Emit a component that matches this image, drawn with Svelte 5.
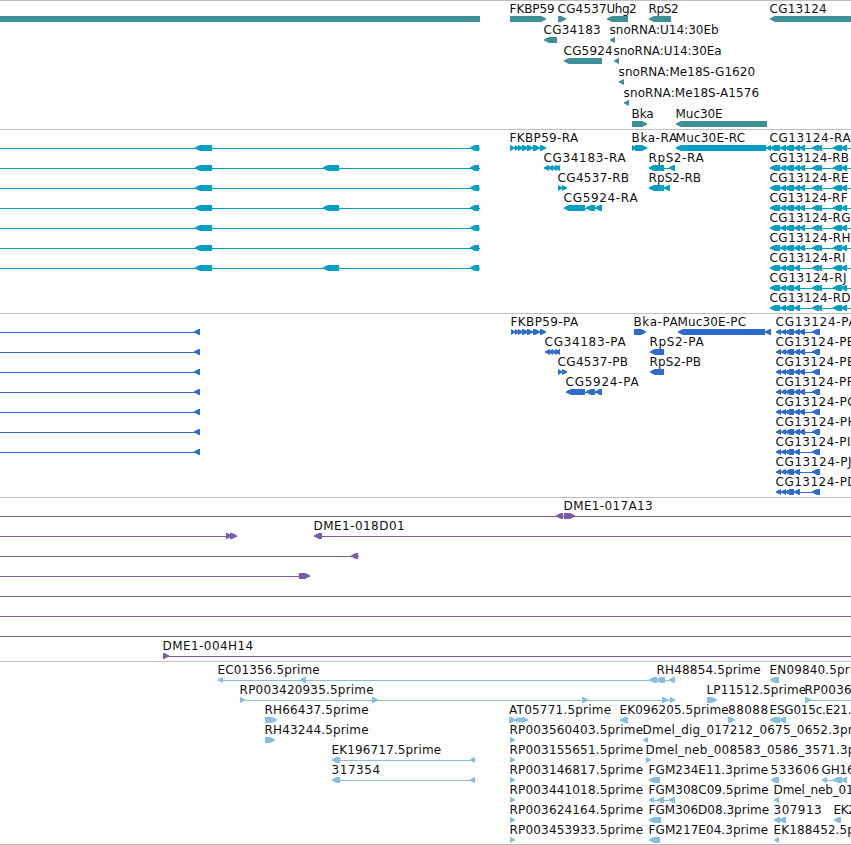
<script>
    const WIDTH = 851;

    // strand: 1 forward, -1 reverse; the line joins the first and last part
    // unless a span is given
    function feature(label, x, end, strand, parts = [], span = null) {
        return { label, x: x + 0.6, width: end - x - 1, strand, parts, span };
    }

    // feature without a visible label
    function bare(strand, parts, span = null) {
        return feature("", 0, 0, strand, parts, span);
    }

    function arrow([start, end], strand) {
        const tip = Math.min(5, end - start);
        const head = strand < 0 ? start : end;
        const tail = strand < 0 ? end : start;
        const dir = -strand;
        return [
            [head, 18.4],
            [head + dir * tip * 0.5, 17],
            [head + dir * tip, 16],
            [tail, 16],
            [tail, 22],
            [head + dir * tip, 22],
            [head + dir * tip * 0.5, 20.8],
            [head, 19.4]
        ].map((p) => p.join(",")).join(" ");
    }

    function spanOf(f) {
        if (f.span) return f.span;
        if (f.parts.length < 2) return null;
        return [f.parts[0][0], f.parts[f.parts.length - 1][1]];
    }

    const genes = [
        [
            bare(-1, [[-20, 480]]),
            feature("FKBP59", 509, 555, 1, [[510, 546]]),
            feature("CG4537", 557, 607, 1, [[558, 566]]),
            feature("Uhg2", 606, 637, -1, [[607, 628]]),
            feature("RpS2", 648, 679, -1, [[649, 671]]),
            feature("CG13124", 769, 827, -1, [[770, 900]])
        ],
        [
            feature("CG34183", 543, 601, -1, [[544, 557]]),
            feature("snoRNA:U14:30Eb", 609, 719, -1, [[610, 615]])
        ],
        [
            feature("CG5924", 563, 613, -1, [[564, 602]]),
            feature("snoRNA:U14:30Ea", 613, 722, -1, [[614, 619]])
        ],
        [feature("snoRNA:Me18S-G1620", 618, 755.5, -1, [[619, 624]])],
        [feature("snoRNA:Me18S-A1576", 623, 759.5, -1, [[624, 629]])],
        [
            feature("Bka", 631, 654, 1, [[632, 647]]),
            feature("Muc30E", 675, 723, -1, [[676, 767]])
        ]
    ];

    const fkbpExons = [[510, 515], [515, 519], [518, 523], [522, 528], [527, 533], [533, 540], [540, 546]];
    const transcriptEnds = [
        ["RA", 851], ["RB", 849.5], ["RE", 849], ["RF", 848], ["RG", 851],
        ["RH", 851], ["RI", 846], ["RJ", 847], ["RD", 851]
    ];
    const transcriptExtras = [
        [
            feature("FKBP59-RA", 509, 578.5, 1, fkbpExons),
            feature("Bka-RA", 631, 677.5, 1, [[632, 636], [635, 647]]),
            feature("Muc30E-RC", 675, 745.5, -1, [[676, 766], [766, 771]])
        ],
        [
            feature("CG34183-RA", 543, 626, -1, [[544, 549], [548, 553], [552, 557], [555, 560]]),
            feature("RpS2-RA", 648, 704, -1, [[649, 664], [669, 675]])
        ],
        [
            feature("CG4537-RB", 557, 629.5, 1, [[558, 562], [562, 567]]),
            feature("RpS2-RB", 648, 701.5, -1, [[649, 664], [664, 670]])
        ],
        [feature("CG5924-RA", 563, 638, -1, [[564, 585], [586, 595], [595, 602]])]
    ];
    const transcripts = transcriptEnds.map(([name, end], i) => {
        const row = [...(transcriptExtras[i] ?? [])];
        if (i < 7) {
            const middle = [1, 3, 6].includes(i) ? [[323, 339]] : [];
            row.push(bare(-1, [[195, 212], ...middle, [470, 479]], [-10, 480]));
        }
        const tail = i < 6 ? [[794, 800], [799, 805]] : [[794, 800]];
        row.push(feature("CG13124-" + name, 769, end, -1,
            [[770, 780], [780, 786], [785, 794], ...tail, [812, 819], [816, 822], [833, 842], [841, 847]],
            [770, 860]));
        return row;
    });

    const proteinEnds = [
        ["PA", 857], ["PB", 855.5], ["PE", 855], ["PF", 854], ["PG", 857],
        ["PH", 857], ["PI", 851], ["PJ", 852], ["PD", 857]
    ];
    const proteinExtras = [
        [
            feature("FKBP59-PA", 510, 578.5, 1, [[511, 515], ...fkbpExons.slice(1)]),
            feature("Bka-PA", 633, 678, 1, [[634, 646]]),
            feature("Muc30E-PC", 677, 746.5, -1, [[678, 765], [765, 771]])
        ],
        [
            feature("CG34183-PA", 544, 626, -1, [[545, 550], [549, 553], [552, 557], [555, 560]]),
            feature("RpS2-PA", 649, 704, -1, [[650, 664]])
        ],
        [
            feature("CG4537-PB", 557, 628.5, 1, [[558, 562], [562, 567]]),
            feature("RpS2-PB", 649, 701.5, -1, [[650, 664]])
        ],
        [feature("CG5924-PA", 565, 639, -1, [[566, 585], [586, 595], [595, 602]])]
    ];
    const proteins = proteinEnds.map(([name, end], i) => {
        const row = [...(proteinExtras[i] ?? [])];
        if (i < 7) {
            row.push(bare(-1, [[194, 200]], [-10, 200]));
        }
        const tail = i < 6 ? [[794, 800], [799, 805]] : [[794, 800]];
        row.push(feature("CG13124-" + name, 775, end, -1,
            [[776, 781], [781, 786], [785, 794], ...tail, [812, 820]]));
        return row;
    });

    const clones = [
        [
            bare(-1, [[556, 563]], [-10, 860]),
            feature("DME1-017A13", 563, 653, 1, [[564, 575]])
        ],
        [
            bare(1, [[226, 232], [230, 237]], [-10, 237]),
            feature("DME1-018D01", 313, 405, -1, [[314, 322]], [314, 860])
        ],
        [bare(-1, [[351, 358]], [-10, 359])],
        [bare(1, [[299, 310]], [-10, 310])],
        [bare(1, [], [-10, 860])],
        [bare(1, [], [-10, 860])],
        [bare(1, [], [-10, 860])],
        [feature("DME1-004H14", 162, 253.5, 1, [[163, 169]], [163, 860])]
    ];

    const ests = [
        [
            feature("EC01356.5prime", 217, 320, -1, [[218, 223], [300, 306], [649, 657], [656, 665], [669, 675]]),
            feature("RH48854.5prime", 656, 761, -1),
            feature("EN09840.5prime", 769, 873, -1, [[770, 779]])
        ],
        [
            feature("RP003420935.5prime", 239, 374, 1, [[240, 245], [372, 378], [582, 588], [662, 668], [670, 675]]),
            feature("LP11512.5prime", 706, 806.5, 1, [[707, 717]]),
            feature("RP0036", 804, 852, 1, [[805, 811]], [805, 860])
        ],
        [
            feature("RH66437.5prime", 264, 369, 1, [[265, 277]]),
            feature("AT05771.5prime", 508.5, 611.5, 1, [[509, 516], [516, 520], [519, 524], [522, 528]]),
            feature("EK096205.5prime", 619, 729, -1, [[620, 628]]),
            feature("88088", 727.5, 768.5, 1, [[728, 735]]),
            feature("ESG015c.E21.", 769, 852, -1, [[770, 780], [779, 786]])
        ],
        [
            feature("RH43244.5prime", 264, 369, 1, [[265, 275]]),
            feature("RP003560403.5prime", 509, 643.5, 1, [[510, 515]]),
            feature("Dmel_dig_017212_0675_0652.3prime", 642, 876, -1, [[643, 648]])
        ],
        [
            feature("EK196717.5prime", 331, 441.5, -1, [[332, 340], [470, 475]]),
            feature("RP003155651.5prime", 509, 643.5, 1, [[510, 515]]),
            feature("Dmel_neb_008583_0586_3571.3prime", 645, 884, 1, [[646, 651]])
        ],
        [
            feature("317354", 331, 380.5, -1, [[332, 340], [470, 475]]),
            feature("RP003146817.5prime", 509, 643.5, 1, [[510, 515]]),
            feature("FGM234E11.3prime", 648, 768.5, -1, [[649, 660]]),
            feature("533606", 770, 819.5, -1, [[771, 779]]),
            feature("GH16", 821, 855, -1, [[822, 827], [833, 842], [841, 847]])
        ],
        [
            feature("RP003441018.5prime", 509, 643.5, 1, [[510, 515]]),
            feature("FGM308C09.5prime", 648, 769, -1, [[649, 654], [657, 664], [669, 675]]),
            feature("Dmel_neb_01", 773, 854, -1, [[774, 779]])
        ],
        [
            feature("RP003624164.5prime", 509, 643.5, 1, [[510, 515]]),
            feature("FGM306D08.3prime", 648, 769.5, -1, [[649, 661]]),
            feature("307913", 773, 822, -1, [[774, 780], [779, 786]]),
            feature("EK2", 833, 856, -1, [[834, 841]])
        ],
        [
            feature("RP003453933.5prime", 509, 643.5, 1, [[510, 515]]),
            feature("FGM217E04.3prime", 648, 768.5, -1, [[649, 660]]),
            feature("EK188452.5prime", 773, 883, -1, [[774, 779]])
        ]
    ];

    const tracks = [
        { name: "gene", pitch: 21, height: 128, rows: genes },
        { name: "transcript", pitch: 20, height: 183, rows: transcripts },
        { name: "protein", pitch: 20, height: 183, rows: proteins },
        { name: "clone", pitch: 20, height: 163, rows: clones },
        { name: "est", pitch: 20, height: 182, rows: ests }
    ];
</script>

<main class="browser">
    {#each tracks as track}
        <section class="track {track.name}">
            <svg width={WIDTH} height={track.height} viewBox="0 1 {WIDTH} {track.height}">
                {#each track.rows as row, i}
                    <g transform="translate(0 {i * track.pitch})">
                        {#each row as f}
                            {@const span = spanOf(f)}
                            {#if span}
                                <rect x={span[0]} y="19" width={span[1] - span[0]} height="1" />
                            {/if}
                            {#each f.parts as part}
                                <polygon points={arrow(part, f.strand)} />
                            {/each}
                            {#if f.label}
                                <text x={f.x} y="13" textLength={f.width}>{f.label}</text>
                            {/if}
                        {/each}
                    </g>
                {/each}
            </svg>
        </section>
    {/each}
</main>

<style>
    :global(body) {
        margin: 0;
        background: #fff;
    }

    .browser {
        width: 851px;
        height: 845px;
        overflow: hidden;
        box-sizing: border-box;
    }

    .track {
        border-top: 1px solid #bfbfbf;
    }

    .track:last-child {
        border-bottom: 1px solid #bfbfbf;
    }

    svg {
        display: block;
    }

    text {
        font-family: "DejaVu Sans", sans-serif;
        font-size: 12px;
        fill: #111;
    }

    .gene {
        fill: #3f8f96;
    }

    .transcript {
        fill: #009fc1;
    }

    .protein {
        fill: #2f6bca;
    }

    .clone {
        fill: #7a5bab;
    }

    .est {
        fill: #87bddf;
    }
</style>
